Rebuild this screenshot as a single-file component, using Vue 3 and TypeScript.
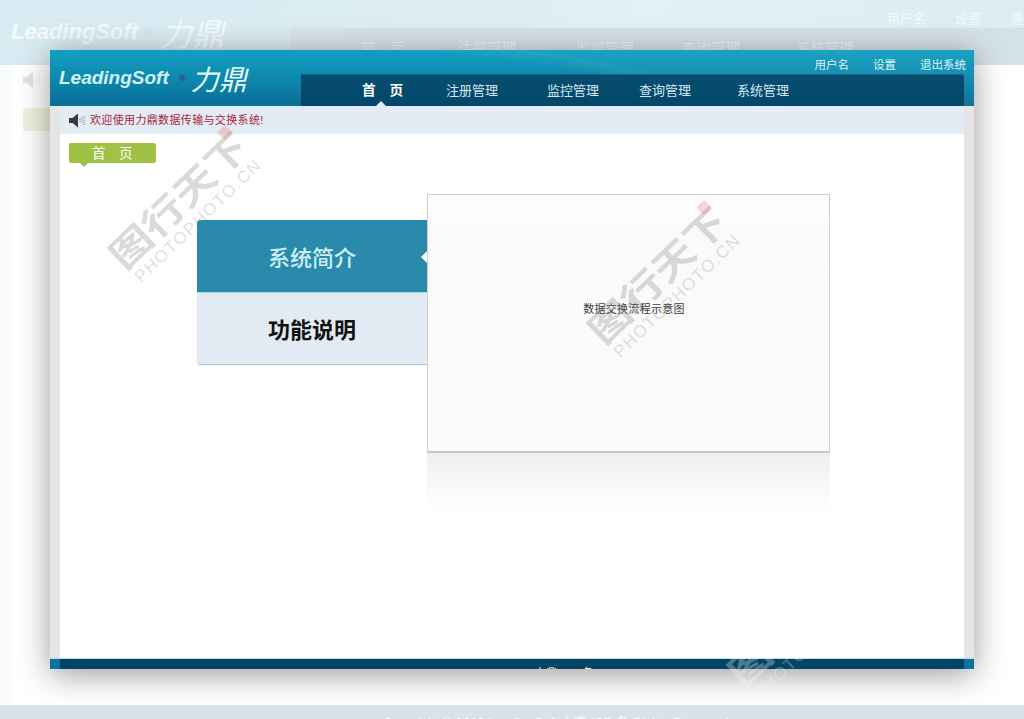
<script setup lang="ts">
const bgNav = [
  { label: '首　页', left: 361 },
  { label: '注册管理', left: 458 },
  { label: '监控管理', left: 576 },
  { label: '查询管理', left: 682 },
  { label: '系统管理', left: 796 },
]
const navItems = ['首　页', '注册管理', '监控管理', '查询管理', '系统管理']
const marks = [
  { x: 183, y: 205, light: false },
  { x: 662, y: 280, light: false },
  { x: 802, y: 622, light: true },
]
</script>

<template>
  <div class="desk">
    <div class="bg-page">
      <header class="bg-header">
        <div class="bg-logo"><span class="bg-brand">LeadingSoft</span><i class="bg-dot"></i><span class="bg-cn">力鼎</span></div>
        <div class="bg-links"><span>用户名</span><span>设置</span><span>退出系统</span></div>
        <div class="bg-nav">
          <span v-for="n in bgNav" :key="n.label" class="bg-nav-item" :style="{ left: n.left - 290 + 'px' }">{{ n.label }}</span>
        </div>
      </header>
      <main class="bg-body">
        <svg class="bg-speaker" viewBox="0 0 20 18" width="20" height="18">
          <path d="M1 6h4l6-5v16l-6-5H1z" fill="#e3e3e3" />
          <path d="M13 7v4M15 5.500v7M17 4v10" stroke="#e6e6e6" stroke-width="1" stroke-dasharray="1 1" fill="none" />
        </svg>
        <div class="bg-tag"></div>
      </main>
      <footer class="bg-footer">Copyright © 2012 LeadingSoft 力鼎 ICP 备 Rights Reserved</footer>
    </div>

    <section class="win">
      <header class="win-head">
        <svg class="swoosh" viewBox="0 0 924 56" preserveAspectRatio="none">
          <path d="M300 0C420 0 520 10 690 56H924V0z" fill="#ffffff" opacity=".035" />
          <path d="M430 0c70 4 150 20 240 56h30C620 22 530 4 470 0z" fill="#ffffff" opacity=".03" />
        </svg>
        <div class="logo">
          <span class="brand">LeadingSoft</span>
          <i class="dot"></i>
          <span class="cn">力鼎</span>
        </div>
        <div class="head-right">
          <div class="links"><span>用户名</span><span>设置</span><span>退出系统</span></div>
          <nav class="nav">
            <a v-for="(n, i) in navItems" :key="n" class="nav-item" :class="{ on: i === 0 }">{{ n }}</a>
          </nav>
        </div>
      </header>

      <div class="win-mid">
        <div class="notice">
          <svg class="speaker" viewBox="0 0 17 15" width="17" height="15">
            <path d="M0 5h3.500L9 .500v14L3.500 10H0z" fill="#3a3a3a" />
            <path d="M11 6v3M13 4.500v6M15 3v9" stroke="#777" stroke-width="1" stroke-dasharray="1 1" fill="none" />
          </svg>
          <span class="notice-text">欢迎使用力鼎数据传输与交换系统!</span>
        </div>
        <div class="content">
          <div class="tag">首　页</div>
          <div class="stage">
            <div class="menu">
              <div class="menu-item active">系统简介</div>
              <div class="menu-item">功能说明</div>
            </div>
            <div class="panel-wrap">
              <div class="panel">数据交换流程示意图</div>
              <div class="reflect"></div>
            </div>
          </div>
        </div>
      </div>

      <footer class="win-foot">
        <span class="foot-text">Copyright © 2012 LeadingSoft 力鼎 ICP 备 Rights Reserved</span>
      </footer>
    </section>

    <div
      v-for="m in marks"
      :key="m.x"
      class="mark"
      :class="{ light: m.light }"
      :style="{ left: m.x + 'px', top: m.y + 'px' }"
    >
      <div class="mark-cn">图行天下</div>
      <div class="mark-en">PHOTOPHOTO.CN</div>
      <i class="seal"></i>
    </div>
  </div>
</template>

<style scoped>
.desk {
  position: relative;
  width: 1024px;
  height: 719px;
  overflow: hidden;
  background: #fff;
  font-family: "Liberation Sans", "Noto Sans CJK SC", sans-serif;
}
.bg-page {
  display: flex;
  flex-direction: column;
  height: 100%;
}
.bg-header {
  position: relative;
  height: 65px;
  flex: none;
  background: linear-gradient(100deg, #d9ebf2 0%, #dcedf4 50%, #e2f1f6 62%, #dbecf3 100%);
}
.bg-logo {
  position: absolute;
  left: 11px;
  top: 14px;
  display: flex;
  align-items: center;
  color: #f3fafc;
}
.bg-brand {
  font: italic bold 22px "Liberation Sans", sans-serif;
}
.bg-dot {
  width: 6px;
  height: 6px;
  border-radius: 50%;
  background: #d2e4ec;
  margin: 0 8px;
}
.bg-cn {
  font: italic 32px/36px "Noto Sans CJK SC", sans-serif;
}
.bg-links {
  position: absolute;
  top: 8px;
  left: 887px;
  display: flex;
  gap: 29px;
  white-space: nowrap;
  font-size: 13px;
  color: #f4fafc;
}
.bg-nav {
  position: absolute;
  left: 290px;
  right: 0;
  top: 28px;
  bottom: 0;
  background: linear-gradient(90deg, #dae6eb 0, #d5e1e8 120px);
  border-radius: 4px 0 0 0;
}
.bg-nav-item {
  position: absolute;
  top: 9px;
  font-size: 14.500px;
  color: #eef3f6;
  white-space: nowrap;
}
.bg-body {
  position: relative;
  flex: 1;
  background: linear-gradient(90deg, #fafbfb 0, #fafbfb 12px, #ffffff 12px);
}
.bg-speaker {
  position: absolute;
  left: 22px;
  top: 6px;
}
.bg-tag {
  position: absolute;
  left: 23px;
  top: 43px;
  width: 60px;
  height: 23px;
  background: #edf3df;
  border-radius: 2px;
}
.bg-footer {
  height: 14px;
  flex: none;
  overflow: hidden;
  background: #d8e3e9;
  padding-top: 10px;
  box-sizing: border-box;
  padding-left: 383px;
  font-size: 13px;
  line-height: 16px;
  color: #fff;
  white-space: nowrap;
}

.win {
  position: absolute;
  left: 50px;
  top: 50px;
  width: 924px;
  height: 619px;
  display: flex;
  flex-direction: column;
  background: #e5e5e5;
  box-shadow: 0 5px 30px rgba(0, 0, 0, 0.4);
}
.win-head {
  position: relative;
  display: flex;
  height: 56px;
  flex: none;
  background: linear-gradient(180deg, #12a0c1 0%, #0d86ab 55%, #0a6d96 100%);
}
.swoosh {
  position: absolute;
  inset: 0;
  width: 100%;
  height: 100%;
}
.logo {
  position: relative;
  width: 251px;
  flex: none;
  display: flex;
  align-items: center;
  padding: 0 0 0 9px;
  box-sizing: border-box;
  color: #d2f1f6;
}
.brand {
  font: italic bold 19px "Liberation Sans", sans-serif;
}
.dot {
  width: 6px;
  height: 6px;
  border-radius: 50%;
  background: #2a5cb0;
  margin: 0 6px 0 10px;
  flex: none;
}
.cn {
  font: italic 28px/32px "Noto Sans CJK SC", sans-serif;
  color: #e4fafc;
}
.head-right {
  position: relative;
  flex: 1;
  display: flex;
  flex-direction: column;
  padding-right: 10px;
}
.links {
  height: 24px;
  flex: none;
  display: flex;
  justify-content: flex-end;
  align-items: center;
  gap: 24px;
  padding: 5px 0 0;
  margin-right: -2px;
  box-sizing: border-box;
  font-size: 11.500px;
  line-height: 14px;
  color: #dff3f8;
  white-space: nowrap;
}
.nav {
  flex: 1;
  display: grid;
  grid-template-columns: 84px 101px 92px 98px auto;
  align-items: center;
  padding-left: 61px;
  background: linear-gradient(180deg, #064d70, #03486b);
  border-top: 1px solid #12637f;
  border-radius: 0 3px 0 0;
}
.nav-item {
  position: relative;
  font-size: 13px;
  line-height: 32px;
  height: 31px;
  color: #d5e6ee;
  white-space: nowrap;
}
.nav-item.on {
  color: #fff;
  font-weight: 700;
  font-size: 13.700px;
}
.nav-item.on::after {
  content: "";
  position: absolute;
  left: 14px;
  bottom: 0;
  border: 5px solid transparent;
  border-top: 0;
  border-bottom: 5px solid #e3ebf5;
}
.win-mid {
  flex: 1;
  min-height: 0;
  margin: 0 10px;
  display: flex;
  flex-direction: column;
  background: #fff;
}
.notice {
  height: 28px;
  flex: none;
  display: flex;
  align-items: center;
  gap: 4px;
  padding-left: 9px;
  background: #e3ebf5;
  font-size: 11px;
  letter-spacing: 0.350px;
  color: #a8283c;
  white-space: nowrap;
}
.notice-text {
  line-height: 14px;
  padding-bottom: 1px;
}
.content {
  position: relative;
  flex: 1;
  padding: 9px 0 0 9px;
}
.tag {
  position: relative;
  width: 87px;
  height: 20px;
  padding-left: 23px;
  box-sizing: border-box;
  background: #9fc244;
  border-radius: 2px;
  color: #fff;
  font-size: 13.500px;
  line-height: 22px;
  white-space: nowrap;
}
.tag::after {
  content: "";
  position: absolute;
  left: 11px;
  top: 20px;
  border: 4px solid transparent;
  border-bottom: 0;
  border-top: 4px solid #9fc244;
}
.stage {
  display: flex;
  align-items: flex-start;
  margin: 31px 0 0 128px;
}
.menu {
  width: 230px;
  margin-top: 26px;
  flex: none;
  border-radius: 4px 0 0 4px;
  overflow: hidden;
  box-shadow: 0 1px 1px #b9bec4;
}
.menu-item {
  height: 71px;
  display: flex;
  align-items: center;
  padding: 0 0 2px 71px;
  box-sizing: border-box;
  background: #e2eaf4;
  font-size: 22px;
  font-weight: 700;
  color: #111;
}
.menu-item.active {
  position: relative;
  height: 73px;
  padding-bottom: 0;
  background: #2a8aab;
  font-weight: 500;
  color: #cdeef5;
  border-bottom: 1px solid #a7d5e4;
}
.menu-item.active::after {
  content: "";
  position: absolute;
  right: 0;
  top: 31px;
  border: 6px solid transparent;
  border-left: 0;
  border-right: 6px solid #fff;
}
.panel-wrap {
  width: 403px;
  flex: none;
}
.panel {
  height: 259px;
  box-sizing: border-box;
  display: flex;
  align-items: flex-start;
  justify-content: center;
  padding: 106px 0 0 11px;
  background: linear-gradient(180deg, #fff 0, #fafafa 15%, #fbfbfb 100%);
  border: 1px solid #cfcfcf;
  border-bottom: 2px solid #c8c8c8;
  font-size: 11px;
  letter-spacing: 0.300px;
  line-height: 16px;
  color: #3a3a3a;
}
.reflect {
  height: 60px;
  background: linear-gradient(180deg, #efefef 0, #f7f7f7 45%, #ffffff 100%);
}
.win-foot {
  position: relative;
  height: 11px;
  flex: none;
  overflow: hidden;
  background: #0a72a0;
  border-top: 1px solid #b8dfe9;
  box-sizing: border-box;
}
.win-foot::before {
  content: "";
  position: absolute;
  left: 10px;
  right: 10px;
  top: 0;
  bottom: 0;
  background: #044565;
}
.foot-text {
  position: absolute;
  left: 330px;
  top: 7px;
  font-size: 11px;
  letter-spacing: 0.150px;
  line-height: 14px;
  color: #fff;
  white-space: nowrap;
}

.mark {
  position: absolute;
  width: 230px;
  display: flex;
  flex-direction: column;
  align-items: center;
  transform: translate(-50%, -50%) rotate(-44deg);
  pointer-events: none;
}
.mark-cn {
  font: 700 44px/48px "Noto Sans CJK SC", sans-serif;
  margin-bottom: -3px;
  color: rgba(110, 110, 110, 0.26);
  transform: scaleY(0.82);
  white-space: nowrap;
}
.mark-en {
  font: 17px/20px "Liberation Sans", sans-serif;
  letter-spacing: 1.500px;
  color: rgba(110, 110, 110, 0.22);
  white-space: nowrap;
}
.seal {
  position: absolute;
  left: 190px;
  top: 4px;
  width: 11px;
  height: 11px;
  border-radius: 2px;
  background: rgba(230, 120, 120, 0.3);
}
.mark.light .mark-cn,
.mark.light .mark-en {
  color: rgba(255, 255, 255, 0.28);
}
.mark.light .seal {
  display: none;
}
</style>
